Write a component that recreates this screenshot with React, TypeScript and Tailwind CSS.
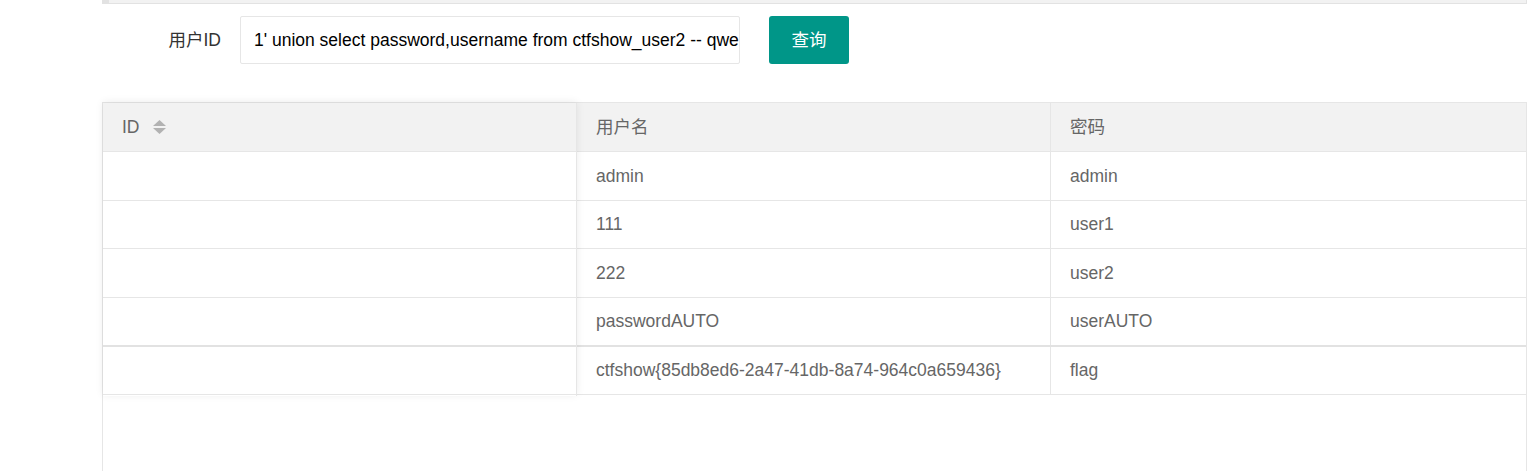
import React from 'react';

const rows = [
  { name: 'admin', pass: 'admin' },
  { name: '111', pass: 'user1' },
  { name: '222', pass: 'user2' },
  { name: 'passwordAUTO', pass: 'userAUTO' },
  { name: 'ctfshow{85db8ed6-2a47-41db-8a74-964c0a659436}', pass: 'flag' },
];

const SortIcon = () => (
  <svg width="13" height="14" viewBox="0 0 13 14" className="ml-[13px]">
    <polygon points="6.5,0 13,6 0,6" fill="#b2b2b2" />
    <polygon points="0,8 13,8 6.5,14" fill="#b2b2b2" />
  </svg>
);

const App: React.FC = () => {
  return (
    <div
      className="h-[471px] w-[1534px] overflow-hidden bg-white text-[17.5px]"
      style={{ fontFamily: '"Liberation Sans", "Noto Sans CJK SC", Arial, sans-serif' }}
    >
      <div className="ml-[102px] w-[1425px]">
        {/* top strip of previous panel */}
        <div className="flex h-[4px] border-b border-r border-[#e2e2e2] bg-[#f2f2f2]">
          <div className="w-[7px] bg-[#e2e2e2]"></div>
        </div>

        {/* search form */}
        <div className="mt-[12px] flex items-center">
          <label className="w-[138px] pr-[19px] text-right text-[#333]">用户ID</label>
          <div className="h-[48px] w-[500px] overflow-hidden whitespace-nowrap rounded-[2px] border border-[#e6e6e6] pl-[13px] leading-[46px] text-[#000]">
            1' union select password,username from ctfshow_user2 -- qwe
          </div>
          <button className="ml-[29px] h-[48px] w-[80px] rounded-[3px] bg-[#009688] text-white">查询</button>
        </div>

        {/* table */}
        <div className="mt-[38px] flex h-[380px] border-l border-r border-t border-[#e6e6e6] text-[#666]">
          {/* fixed left column */}
          <div className="relative z-10 flex h-[293px] w-[474px] shrink-0 flex-col border-r border-[#e6e6e6] bg-white shadow-[0_-1px_8px_rgba(0,0,0,0.08)]">
            <div className="flex h-[49px] shrink-0 items-center border-b border-[#e6e6e6] bg-[#f2f2f2] pl-[19px]">
              ID
              <SortIcon />
            </div>
            {rows.map((r, i) => (
              <div
                key={i}
                className={
                  i === 3
                    ? 'h-[49px] shrink-0 border-b-2 border-[#e2e2e2]'
                    : 'h-[48.5px] shrink-0 border-b border-[#e6e6e6]'
                }
              ></div>
            ))}
          </div>

          {/* scrollable body */}
          <div className="flex flex-1 flex-col">
            <div className="flex h-[49px] shrink-0 border-b border-[#e6e6e6] bg-[#f2f2f2]">
              <div className="flex w-[474px] items-center border-r border-[#e6e6e6] pl-[19px]">用户名</div>
              <div className="flex flex-1 items-center pl-[19px]">密码</div>
            </div>
            {rows.map((r, i) => (
              <div
                key={i}
                className={
                  i === 3
                    ? 'flex h-[49px] shrink-0 border-b-2 border-[#e2e2e2]'
                    : 'flex h-[48.5px] shrink-0 border-b border-[#e6e6e6]'
                }
              >
                <div className="flex w-[474px] items-center border-r border-[#e6e6e6] pl-[19px] whitespace-nowrap">
                  {r.name}
                </div>
                <div className="flex flex-1 items-center pl-[19px]">{r.pass}</div>
              </div>
            ))}
          </div>
        </div>
      </div>
    </div>
  );
};

export default App;
